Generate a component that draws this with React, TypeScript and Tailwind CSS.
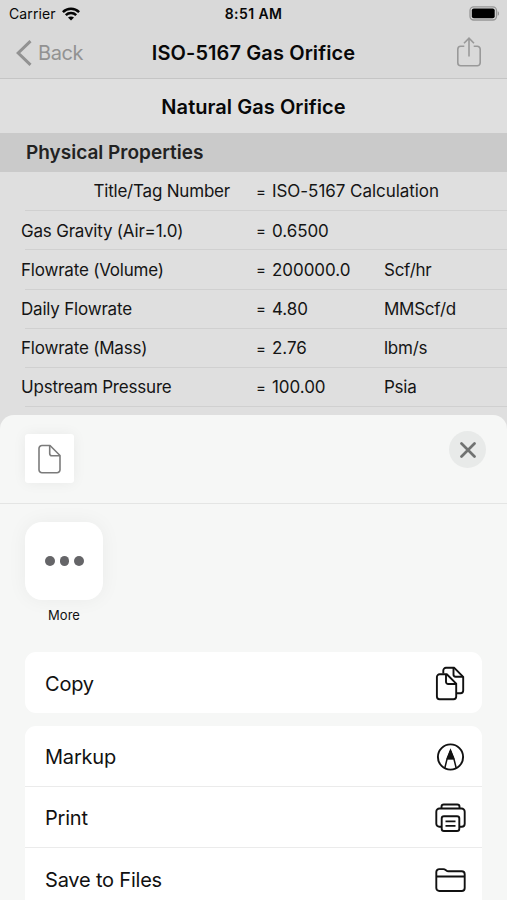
import React from "react";

type Property = { label: string; value: string; unit?: string; right?: boolean };

const properties: Property[] = [
  { label: "Title/Tag Number", value: "ISO-5167 Calculation", right: true },
  { label: "Gas Gravity (Air=1.0)", value: "0.6500" },
  { label: "Flowrate (Volume)", value: "200000.0", unit: "Scf/hr" },
  { label: "Daily Flowrate", value: "4.80", unit: "MMScf/d" },
  { label: "Flowrate (Mass)", value: "2.76", unit: "lbm/s" },
  { label: "Upstream Pressure", value: "100.00", unit: "Psia" },
];

function StatusBar() {
  return (
    <div className="grid h-[27px] grid-cols-[1fr_auto_1fr] items-center px-[8px] text-[14px]">
      <div className="flex items-center gap-[6px] pl-px">
        <span className="tracking-[0.1px]">Carrier</span>
        <svg width="18" height="14" viewBox="0 0 18 14" fill="none" stroke="#050505" strokeWidth="2.5">
          <path d="M.9 5.1C5.4.7 12.6.7 17.1 5.1" />
          <path d="M3.8 8.1C6.7 5.3 11.3 5.3 14.2 8.1" />
          <path d="M9 13.6 6 10.5C7.7 9 10.3 9 12 10.5Z" fill="#050505" stroke="none" />
        </svg>
      </div>
      <span className="text-center font-semibold tracking-[0.4px]">8:51 AM</span>
      <svg className="justify-self-end" width="31" height="15" viewBox="0 0 31 15">
        <rect x="2" y=".8" width="26.5" height="13.2" rx="3.7" fill="#d8d8d8" stroke="#969696" strokeWidth="1.3" />
        <rect x="3.8" y="2.6" width="22.9" height="9.6" rx="2" fill="#000" />
        <path d="M29.7 5.2c2 .7 2 3.8 0 4.5z" fill="#969696" />
      </svg>
    </div>
  );
}

function NavBar() {
  return (
    <div className="grid h-[52px] grid-cols-[1fr_auto_1fr] items-center border-b border-[#c5c5c5] px-[16px]">
      <div className="flex items-center gap-[6px] text-[#929292]">
        <svg width="16" height="26" viewBox="0 0 16 26" fill="none" stroke="currentColor" strokeWidth="3">
          <path d="M14.5 1.2 2.2 13l12.3 11.8" />
        </svg>
        <span className="text-[20px] tracking-[-0.4px]">Back</span>
      </div>
      <h1 className="text-[20px] font-semibold tracking-[0.1px]">ISO-5167 Gas Orifice</h1>
      <svg className="mb-[2px] mr-[9px] justify-self-end" width="26" height="32" viewBox="0 0 26 32" fill="none" stroke="#999" strokeWidth="1.6">
        <path d="M8.3 10.3H4.8a3 3 0 0 0-3 3v13.4a3 3 0 0 0 3 3h16.4a3 3 0 0 0 3-3V13.3a3 3 0 0 0-3-3h-3.5M13 20.5V2.3M8 7.2l5-5 5 5" />
      </svg>
    </div>
  );
}

function PropertyRow({ label, value, unit, right }: Property) {
  return (
    <div className="h-[39.2px] pl-[21px] text-[17px] text-[#151515]">
      <div className="grid h-[38.2px] grid-cols-[209px_26px_16px_112px_1fr] items-center whitespace-nowrap pt-[2px]">
        <span className={right ? "text-right tracking-[-0.2px]" : "tracking-[-0.2px]"}>{label}</span>
        <span />
        <span className="text-[15px]">=</span>
        <span className="tracking-[-0.05px]">{value}</span>
        <span className="tracking-[-0.25px]">{unit}</span>
      </div>
      <div className="ml-[4px] h-px bg-[#d0d0d0]" />
    </div>
  );
}

const iconClass = "h-[36px] w-[36px]";

function CopyIcon() {
  return (
    <svg className={iconClass} viewBox="0 0 36 36" fill="none" stroke="#111" strokeWidth="1.9" strokeLinejoin="round">
      <path d="M11.3 7.5V4.5a2.7 2.7 0 0 1 2.7-2.7h8.3l8.9 9v13.7a2.7 2.7 0 0 1-2.7 2.7H24.5" />
      <path d="M21.500 2v6.500a2.200 2.200 0 0 0 2.200 2.200h7.300" />
      <path d="M7.600 8.300h7.200l9.400 9.300v13a2.700 2.700 0 0 1-2.700 2.700H7.600a2.700 2.700 0 0 1-2.700-2.700V11a2.700 2.700 0 0 1 2.700-2.700Z" />
      <path d="M14 8.500v7.300a2.200 2.200 0 0 0 2.200 2.200h7.800" />
    </svg>
  );
}

function MarkupIcon() {
  return (
    <svg className={iconClass} viewBox="0 0 36 36" fill="none" stroke="#111" strokeWidth="1.9">
      <circle cx="18.500" cy="18" r="12.600" />
      <path d="m12.800 29 2.300-9.200 3.400-8.500 3.400 8.500 2.300 9.200M15.100 19.800h6.800" strokeWidth="1.500" />
      <path d="m18.500 11.300 3.400 8.500h-6.800Z" fill="#111" strokeWidth="1" />
    </svg>
  );
}

function PrintIcon() {
  return (
    <svg className={iconClass} viewBox="0 0 36 36" fill="none" stroke="#111" strokeWidth="1.9">
      <path d="M9.500 8.500V6.800a2.300 2.300 0 0 1 2.300-2.300h13.400a2.300 2.300 0 0 1 2.300 2.300v1.700" />
      <path d="M9.500 26.800H7.300a3 3 0 0 1-3-3V11.700a3.200 3.200 0 0 1 3.200-3.200h22a3.200 3.200 0 0 1 3.200 3.200v12.100a3 3 0 0 1-3 3h-2.200" />
      <rect x="9.700" y="16.200" width="17.600" height="14.800" rx="2.300" />
      <path d="M13.500 21.300h10M13.500 25.900h10" strokeWidth="1.700" />
    </svg>
  );
}

function FolderIcon() {
  return (
    <svg className={iconClass} viewBox="0 0 36 36" fill="none" stroke="#111" strokeWidth="1.9">
      <path d="M4.300 26V10.100a3 3 0 0 1 3-3h4.100c2.300 0 2.800 2.200 5 2.200h13.300a3 3 0 0 1 3 3V26a3 3 0 0 1-3 3H7.300a3 3 0 0 1-3-3ZM4.300 14.500h28.400" />
    </svg>
  );
}

function Action({ label, children }: { label: string; children: React.ReactNode }) {
  return (
    <button className="flex h-[61px] w-full items-center justify-between pl-[20px] pr-[14px] pt-[2px] text-left text-[20px] tracking-[-0.2px] text-[#111]">
      <span>{label}</span>
      {children}
    </button>
  );
}

function ShareSheet() {
  return (
    <section className="relative -mt-[15px] h-[485px] overflow-hidden rounded-t-[14px] bg-[#f6f7f6]">
      <header className="flex h-[89px] items-start justify-between border-b border-[#e4e5e4] pl-[25px] pr-[21px] pt-[19px]">
        <div className="flex h-[49px] w-[49px] items-center justify-center rounded-[3px] bg-white shadow-[0_0_14px_rgba(0,0,0,0.06)]">
          <svg width="24" height="30" viewBox="0 0 24 30" fill="none" stroke="#7b7b7b" strokeWidth="1.6" strokeLinejoin="round">
            <path d="M4 1.500h8L22 11.500v14.200a3 3 0 0 1-3 3H4a3 3 0 0 1-3-3V4.500a3 3 0 0 1 3-3Z" />
            <path d="M11.700 1.500v8a2.300 2.300 0 0 0 2.300 2.300h8" />
          </svg>
        </div>
        <button aria-label="Close" className="-mt-[3px] flex h-[37px] w-[37px] items-center justify-center rounded-full bg-[#e8eae9]">
          <svg width="16" height="16" viewBox="0 0 16 16" stroke="#707271" strokeWidth="2.7" strokeLinecap="round">
            <path d="m1.500 1.500 13 13M14.500 1.500l-13 13" />
          </svg>
        </button>
      </header>
      <div className="h-[148px] pl-[25px] pt-[18px]">
        <div className="flex w-[78px] flex-col items-center">
          <div className="flex h-[78px] w-[78px] items-center justify-center gap-[5px] rounded-[17px] bg-white pl-px shadow-[0_0_20px_rgba(0,0,0,0.05)]">
            <i className="h-[9.5px] w-[9.5px] rounded-full bg-[#656568]" />
            <i className="h-[9.5px] w-[9.5px] rounded-full bg-[#656568]" />
            <i className="h-[9.5px] w-[9.5px] rounded-full bg-[#656568]" />
          </div>
          <span className="mt-[5px] text-[13px] leading-[20px] text-[#111]">More</span>
        </div>
      </div>
      <div className="ml-[25px] w-[457px]">
        <div className="rounded-[11px] bg-white">
          <Action label="Copy"><CopyIcon /></Action>
        </div>
        <div className="mt-[13px] divide-y divide-[#ebebeb] rounded-t-[11px] bg-white">
          <Action label="Markup"><MarkupIcon /></Action>
          <Action label="Print"><PrintIcon /></Action>
          <Action label="Save to Files"><FolderIcon /></Action>
        </div>
      </div>
    </section>
  );
}

export default function App() {
  return (
    <main className="h-[900px] w-[507px] overflow-hidden bg-[#dfdfdf] font-['Inter','Liberation_Sans',sans-serif] text-[#080808]">
      <div className="h-[430px] overflow-hidden">
        <div className="bg-[#d9d9d9]">
          <StatusBar />
          <NavBar />
        </div>
        <h2 className="flex h-[54px] items-center justify-center pt-px text-[20px] font-semibold tracking-[0.05px]">
          Natural Gas Orifice
        </h2>
        <h3 className="flex h-[39px] items-center bg-[#cacaca] pl-[26px] pt-[2px] text-[19px] font-semibold text-[#222]">
          Physical Properties
        </h3>
        {properties.map((p) => (
          <PropertyRow key={p.label} {...p} />
        ))}
      </div>
      <ShareSheet />
    </main>
  );
}
